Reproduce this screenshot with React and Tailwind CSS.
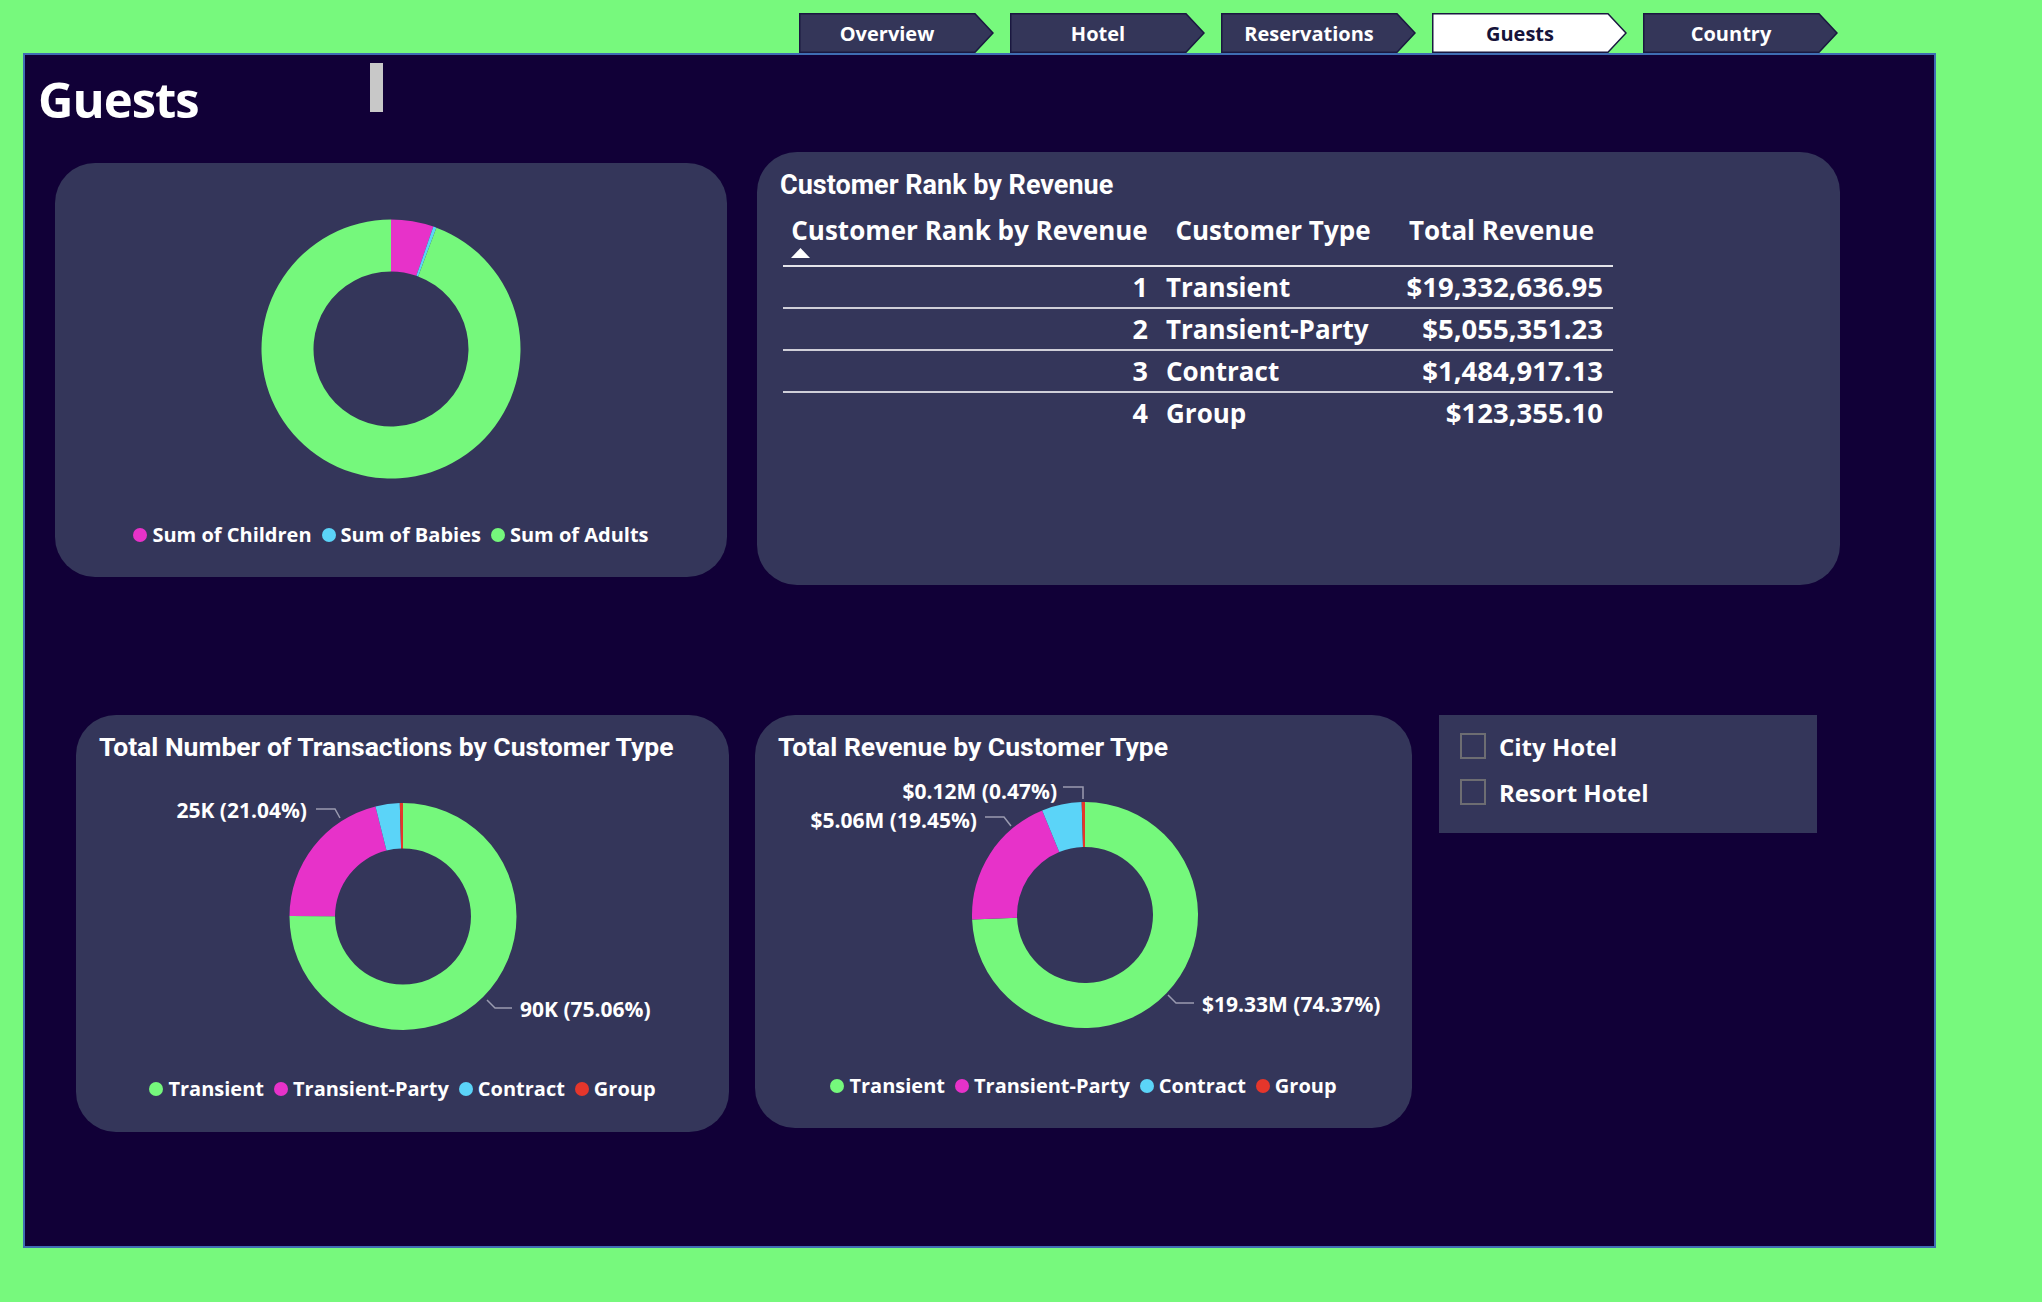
import React from "react";

const GREEN = "#75f87c";
const PINK = "#e732c9";
const BLUE = "#5bd4f8";
const RED = "#e5362b";

function arc(cx, cy, r0, r1, a0, a1) {
  const rad = (d) => (d * Math.PI) / 180;
  const p = (r, a) => [cx + r * Math.sin(rad(a)), cy - r * Math.cos(rad(a))];
  const large = a1 - a0 > 180 ? 1 : 0;
  const [x1, y1] = p(r1, a0);
  const [x2, y2] = p(r1, a1);
  const [x3, y3] = p(r0, a1);
  const [x4, y4] = p(r0, a0);
  return `M${x1} ${y1} A${r1} ${r1} 0 ${large} 1 ${x2} ${y2} L${x3} ${y3} A${r0} ${r0} 0 ${large} 0 ${x4} ${y4} Z`;
}

function Donut({ cx, cy, r0, r1, data }) {
  let acc = 0;
  return (
    <g>
      {data.map((d, i) => {
        const a0 = acc * 3.6;
        acc += d.v;
        const a1 = acc * 3.6;
        return <path key={i} d={arc(cx, cy, r0, r1, a0, a1)} fill={d.c} />;
      })}
    </g>
  );
}

function Legend({ items }) {
  return (
    <div className="flex items-center gap-[10px] text-[20px] font-bold text-white leading-[27px] whitespace-nowrap">
      {items.map(([label, color]) => (
        <div key={label} className="flex items-center gap-[5px]">
          <span className={"block w-[14px] h-[14px] rounded-full " + color} />
          <span>{label}</span>
        </div>
      ))}
    </div>
  );
}

function Tab({ label, active }) {
  return (
    <div className="relative w-[195px] h-[40px]">
      <svg className="absolute inset-0" width="195" height="40" viewBox="0 0 195 40">
        <polygon
          points="0.75,0.75 176,0.75 194,20 176,39.25 0.75,39.25"
          fill={active ? "#ffffff" : "#343659"}
          stroke="#1a1840"
          strokeWidth="1.5"
        />
      </svg>
      <div
        className={
          "relative w-[176px] h-[40px] pt-[2px] flex items-center justify-center font-bold text-[20px] " +
          (active ? "text-[#15133a]" : "text-white")
        }
      >
        {label}
      </div>
    </div>
  );
}

const typeLegend = [
  ["Transient", "bg-[#75f87c]"],
  ["Transient-Party", "bg-[#e732c9]"],
  ["Contract", "bg-[#5bd4f8]"],
  ["Group", "bg-[#e5362b]"],
];

const rows = [
  ["1", "Transient", "$19,332,636.95"],
  ["2", "Transient-Party", "$5,055,351.23"],
  ["3", "Contract", "$1,484,917.13"],
  ["4", "Group", "$123,355.10"],
];

function Label({ x, y, anchor, children }) {
  return (
    <text
      x={x}
      y={y}
      textAnchor={anchor}
      dominantBaseline="central"
      className="fill-white font-bold text-[21px]"
    >
      {children}
    </text>
  );
}

export default function App() {
  return (
    <div className="w-[2042px] h-[1302px] bg-[#77f97d] overflow-hidden font-['Open_Sans',sans-serif]">
      {/* Navigation tabs */}
      <div className="flex gap-[16px] pl-[799px] pt-[13px] h-[53px]">
        <Tab label="Overview" />
        <Tab label="Hotel" />
        <Tab label="Reservations" />
        <Tab label="Guests" active />
        <Tab label="Country" />
      </div>

      {/* Main panel */}
      <div className="ml-[23px] w-[1913px] h-[1195px] border-2 border-[#3f6db3] bg-[#110037]">
        {/* Title row */}
        <div className="flex items-start h-[97px]">
          <div className="ml-[13px] mt-[20px] w-[332px] text-[49px] leading-[49px] font-bold tracking-[-1px] text-white">
            Guests
          </div>
          <div className="mt-[8px] w-[13px] h-[49px] bg-[#c8c8c8]" />
        </div>

        {/* Top row */}
        <div className="flex items-start">
          {/* Guests composition donut */}
          <div className="ml-[30px] mt-[11px] w-[672px] h-[414px] rounded-[40px] bg-[#34365a] flex flex-col items-center">
            <svg className="mt-[56px]" width="260" height="260" viewBox="0 0 260 260">
              <Donut
                cx={130}
                cy={130}
                r0={77.5}
                r1={129.5}
                data={[
                  { v: 5.3, c: PINK },
                  { v: 0.4, c: BLUE },
                  { v: 94.3, c: GREEN },
                ]}
              />
            </svg>
            <div className="mt-[42px]">
              <Legend
                items={[
                  ["Sum of Children", "bg-[#e732c9]"],
                  ["Sum of Babies", "bg-[#5bd4f8]"],
                  ["Sum of Adults", "bg-[#75f87c]"],
                ]}
              />
            </div>
          </div>

          {/* Customer rank table */}
          <div className="ml-[30px] w-[1083px] h-[433px] rounded-[40px] bg-[#34365a] pt-[16px]">
            <div className="ml-[23px] font-['Roboto',sans-serif] font-bold text-[27px] leading-[34px] text-white">
              Customer Rank by Revenue
            </div>
            <div className="ml-[26px] mt-[11px] w-[830px] grid grid-cols-[373px_234px_223px] text-[26px] font-bold text-white whitespace-nowrap">
              <div className="h-[54px] border-b-2 border-[#e4e4ea] flex flex-col">
                <div className="text-center leading-[34px]">Customer Rank by Revenue</div>
                <svg className="ml-[8px] mt-[1px]" width="19" height="10" viewBox="0 0 19 10">
                  <polygon points="9.5,0 19,10 0,10" fill="#ffffff" />
                </svg>
              </div>
              <div className="h-[54px] border-b-2 border-[#e4e4ea] text-center leading-[34px]">
                Customer Type
              </div>
              <div className="h-[54px] border-b-2 border-[#e4e4ea] text-center leading-[34px]">
                Total Revenue
              </div>
              {rows.map((r, i) => {
                const line = i < rows.length - 1 ? " border-b-2 border-[#cfcfd8]" : "";
                return (
                  <React.Fragment key={r[0]}>
                    <div className={"h-[42px] leading-[40px] text-right pr-[8px] text-[27px]" + line}>{r[0]}</div>
                    <div className={"h-[42px] leading-[40px] pl-[10px]" + line}>{r[1]}</div>
                    <div className={"h-[42px] leading-[40px] text-right pr-[10px] text-[27.5px]" + line}>{r[2]}</div>
                  </React.Fragment>
                );
              })}
            </div>
          </div>
        </div>

        {/* Bottom row */}
        <div className="flex items-start mt-[130px]">
          {/* Transactions by customer type */}
          <div className="ml-[51px] w-[653px] h-[417px] rounded-[40px] bg-[#34365a] pt-[15px] flex flex-col items-center">
            <div className="self-start ml-[23px] font-['Roboto',sans-serif] font-bold text-[26.5px] leading-[34px] text-white whitespace-nowrap">
              Total Number of Transactions by Customer Type
            </div>
            <svg className="mt-[11px]" width="653" height="280" viewBox="0 0 653 280">
              <Donut
                cx={327}
                cy={141.5}
                r0={68}
                r1={113.5}
                data={[
                  { v: 75.06, c: GREEN },
                  { v: 21.04, c: PINK },
                  { v: 3.45, c: BLUE },
                  { v: 0.45, c: RED },
                ]}
              />
              <polyline points="240,34 259,34 264,43" fill="none" stroke="#9a9bb0" strokeWidth="1.5" />
              <polyline points="411,225 419,233 436,233" fill="none" stroke="#9a9bb0" strokeWidth="1.5" />
              <Label x={231} y={35} anchor="end">25K (21.04%)</Label>
              <Label x={444} y={234} anchor="start">90K (75.06%)</Label>
            </svg>
            <div className="mt-[20px]">
              <Legend items={typeLegend} />
            </div>
          </div>

          {/* Revenue by customer type */}
          <div className="ml-[26px] w-[657px] h-[413px] rounded-[40px] bg-[#34365a] pt-[15px] flex flex-col items-center">
            <div className="self-start ml-[23px] font-['Roboto',sans-serif] font-bold text-[26.5px] leading-[34px] text-white whitespace-nowrap">
              Total Revenue by Customer Type
            </div>
            <svg className="mt-[11px]" width="657" height="280" viewBox="0 0 657 280">
              <Donut
                cx={330}
                cy={140}
                r0={68}
                r1={113}
                data={[
                  { v: 74.37, c: GREEN },
                  { v: 19.45, c: PINK },
                  { v: 5.71, c: BLUE },
                  { v: 0.47, c: RED },
                ]}
              />
              <polyline points="308,12 328,12 328,24" fill="none" stroke="#9a9bb0" strokeWidth="1.5" />
              <polyline points="230,42 249,42 256,51" fill="none" stroke="#9a9bb0" strokeWidth="1.5" />
              <polyline points="413,220 421,228 439,228" fill="none" stroke="#9a9bb0" strokeWidth="1.5" />
              <Label x={302} y={16} anchor="end">$0.12M (0.47%)</Label>
              <Label x={222} y={45} anchor="end">$5.06M (19.45%)</Label>
              <Label x={447} y={229} anchor="start">$19.33M (74.37%)</Label>
            </svg>
            <div className="mt-[17px]">
              <Legend items={typeLegend} />
            </div>
          </div>

          {/* Hotel slicer */}
          <div className="ml-[27px] w-[378px] h-[118px] bg-[#34365a] pt-[18px] pl-[21px] flex flex-col gap-[20px]">
            {["City Hotel", "Resort Hotel"].map((h) => (
              <div key={h} className="flex items-center gap-[13px] h-[26px]">
                <span className="block w-[26px] h-[26px] border-2 border-[#6d6d72]" />
                <span className="text-[24px] font-bold text-white leading-[26px] pt-[2px]">{h}</span>
              </div>
            ))}
          </div>
        </div>
      </div>
    </div>
  );
}
